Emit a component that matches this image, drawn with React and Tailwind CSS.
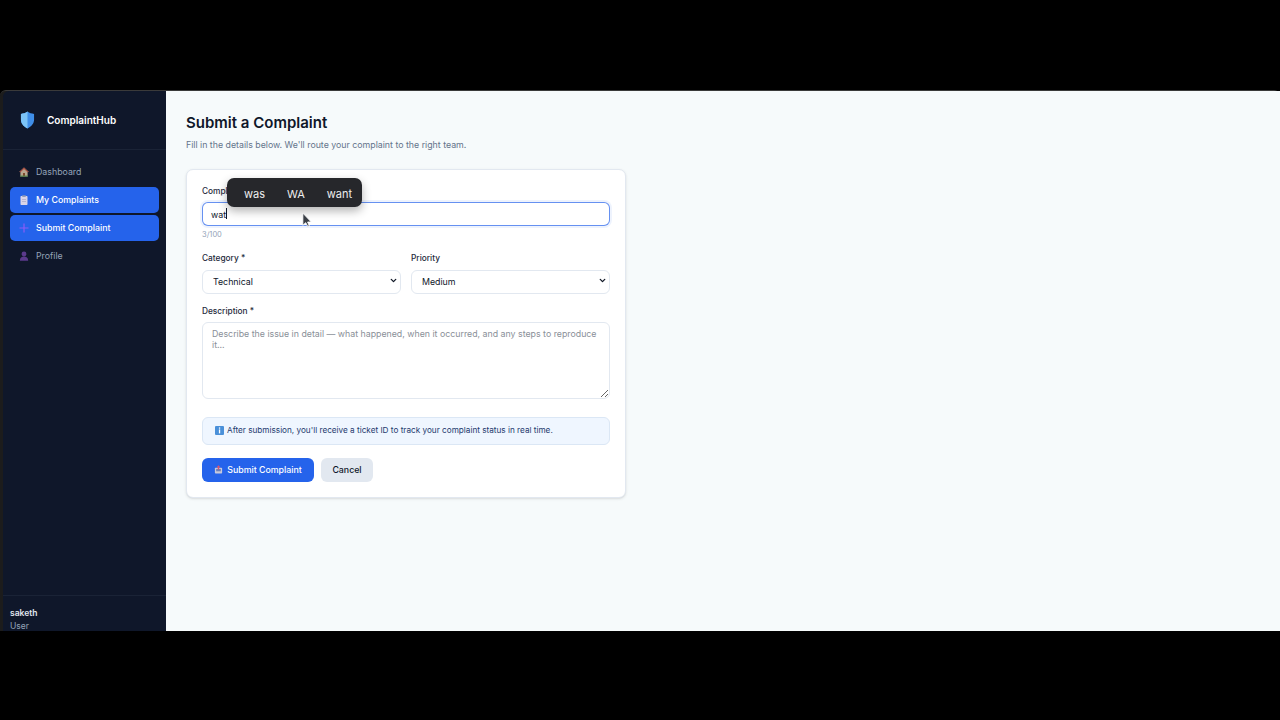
import { useState } from 'react'
import { ChevronDown } from 'lucide-react'

function ShieldLogo() {
  return (
    <svg width="15" height="18" viewBox="0 0 16 19">
      <path d="M8 0.5 C10 2 12.5 2.8 15 3 V9 C15 13.5 12 16.5 8 18.5 C4 16.5 1 13.5 1 9 V3 C3.5 2.8 6 2 8 0.5 Z" fill="#3f8ee8" />
      <path d="M8 0.5 C6 2 3.5 2.8 1 3 V9 C1 13.5 4 16.5 8 18.5 Z" fill="#7cc4f8" />
    </svg>
  )
}

function HouseIcon() {
  return (
    <svg width="10" height="10" viewBox="0 0 10 10">
      <path d="M5 0.5 L9.8 5 H8.6 V9.5 H1.4 V5 H0.2 Z" fill="#b9a68e" />
      <path d="M5 0.5 L9.8 5 L8.6 5.2 L5 2 L1.4 5.2 L0.2 5 Z" fill="#a8483c" />
      <rect x="4" y="6" width="2" height="3.5" fill="#7c4a2d" />
      <rect x="1" y="8.6" width="8" height="1" fill="#4f8a4c" />
    </svg>
  )
}

function ClipboardIcon() {
  return (
    <svg width="10" height="10" viewBox="0 0 10 10">
      <rect x="1.5" y="1" width="7" height="9" rx="0.8" fill="#d9d4e8" />
      <rect x="3.2" y="0.2" width="3.6" height="1.8" rx="0.4" fill="#8f9ab8" />
      <rect x="3" y="4" width="4" height="0.7" fill="#a9a6c4" />
      <rect x="3" y="6" width="4" height="0.7" fill="#a9a6c4" />
    </svg>
  )
}

function PlusIcon() {
  return (
    <svg width="10" height="10" viewBox="0 0 10 10">
      <path d="M5 0.5 V9.5 M0.5 5 H9.5" stroke="#8b5cf6" strokeWidth="1.2" />
    </svg>
  )
}

function BustIcon() {
  return (
    <svg width="10" height="10" viewBox="0 0 10 10">
      <circle cx="5" cy="3" r="2.4" fill="#5b3a8c" />
      <path d="M0.8 9.8 C0.8 6.8 2.8 5.6 5 5.6 C7.2 5.6 9.2 6.8 9.2 9.8 Z" fill="#5b3a8c" />
    </svg>
  )
}

function TrayIcon() {
  return (
    <svg width="9" height="9" viewBox="0 0 10 10">
      <rect x="1" y="3" width="8" height="6.5" rx="0.8" fill="#c7c9dc" />
      <rect x="2.4" y="4.4" width="5.2" height="2.6" fill="#6d7fb8" />
      <path d="M5 0.2 L7 2.4 H5.8 V5 H4.2 V2.4 H3 Z" fill="#e0526b" />
    </svg>
  )
}

function InfoIcon() {
  return (
    <svg width="9" height="9" viewBox="0 0 9 9">
      <rect width="9" height="9" rx="1" fill="#4a90d9" />
      <rect x="3.9" y="1.4" width="1.3" height="1.3" fill="#fff" />
      <rect x="3.9" y="3.4" width="1.3" height="4" fill="#fff" />
    </svg>
  )
}

const navItems = [
  { label: 'Dashboard', icon: <HouseIcon /> },
  { label: 'My Complaints', icon: <ClipboardIcon />, active: true },
  { label: 'Submit Complaint', icon: <PlusIcon />, active: true },
  { label: 'Profile', icon: <BustIcon /> },
]

function Sidebar() {
  return (
    <aside className="w-[163px] shrink-0 bg-[#0f172a] rounded-tl-[6px] flex flex-col overflow-hidden">
      <div className="h-[59px] flex items-center gap-[12px] pl-[17px] border-b border-[#1a2336]">
        <ShieldLogo />
        <span className="text-[10px] font-semibold text-white">ComplaintHub</span>
      </div>
      <nav className="flex flex-col gap-[2px] px-[7px] pt-[9px] flex-1">
        {navItems.map((item) => (
          <div
            key={item.label}
            className={`h-[26px] flex items-center gap-[7px] pl-[9px] rounded-[5px] text-[8.8px] ${
              item.active ? 'bg-[#2563eb] text-white font-medium' : 'text-[#94a3b8]'
            }`}
          >
            <span className="w-[10px] flex justify-center">{item.icon}</span>
            {item.label}
          </div>
        ))}
      </nav>
      <div className="h-[36px] shrink-0 border-t border-[#1a2336] pl-[7px] pt-[11px]">
        <div className="text-[8.5px] leading-[12px] font-semibold text-[#e2e8f0]">saketh</div>
        <div className="text-[8.5px] leading-[14px] text-[#94a3b8]">User</div>
      </div>
    </aside>
  )
}

function Label({ children }) {
  return <label className="block text-[8.3px] leading-[12px] font-medium text-[#1e293b]">{children}</label>
}

function SelectField({ label, options, value }) {
  return (
    <div>
      <Label>{label}</Label>
      <div className="relative mt-[3px]">
        <select
          defaultValue={value}
          className="w-full h-[24px] pl-[10px] bg-white border border-[#e2e8f0] rounded-[6px] text-[8.8px] text-[#0f172a] outline-none appearance-none"
        >
          {options.map((o) => (
            <option key={o}>{o}</option>
          ))}
        </select>
        <ChevronDown size={9} strokeWidth={3.5} className="absolute right-[3px] top-[9px] text-[#111827] pointer-events-none" />
      </div>
    </div>
  )
}

function ComplaintForm() {
  const [title, setTitle] = useState('wat')

  return (
    <div className="relative w-[440px] h-[329px] mt-[18px] bg-white border border-[#e2e8f0] rounded-[7px] px-[15px] pt-[15px] shadow-sm">
      <Label>Complaint Title *</Label>
      <input
        value={title}
        onChange={(e) => setTitle(e.target.value)}
        className="w-full h-[24px] mt-[5px] pl-[8px] pr-[9px] bg-white border-[1.5px] border-[#2563eb]/70 rounded-[6px] text-[8.8px] text-[#0f172a] outline-none shadow-[0_0_0_2px_rgba(37,99,235,0.08)]"
      />
      <div className="mt-[4px] text-[7.5px] leading-[10px] text-[#94a3b8]">3/100</div>

      <div className="grid grid-cols-2 gap-[10px] mt-[12px]">
        <SelectField label="Category *" options={['Technical', 'Billing', 'Service']} value="Technical" />
        <SelectField label="Priority" options={['Low', 'Medium', 'High']} value="Medium" />
      </div>

      <div className="mt-[11px]">
        <Label>Description *</Label>
        <textarea
          placeholder="Describe the issue in detail — what happened, when it occurred, and any steps to reproduce it..."
          className="block w-full h-[77px] mt-[5px] px-[9px] py-[5px] bg-white border border-[#e2e8f0] rounded-[6px] text-[8.8px] leading-[11px] text-[#0f172a] placeholder:text-[#8a8f98] outline-none"
        />
      </div>

      <div className="h-[28px] mt-[18px] flex items-center gap-[3px] pl-[12px] bg-[#eff6ff] border border-[#dbe7f5] rounded-[6px] text-[8.2px] text-[#1e3a6e]">
        <InfoIcon />
        <span>After submission, you'll receive a ticket ID to track your complaint status in real time.</span>
      </div>

      <div className="flex gap-[7px] mt-[13px]">
        <button className="w-[112px] h-[24px] flex items-center justify-center gap-[4px] bg-[#2563eb] rounded-[6px] text-[8.8px] font-medium text-white">
          <TrayIcon />
          Submit Complaint
        </button>
        <button className="w-[52px] h-[24px] bg-[#e2e8f0] rounded-[6px] text-[8.8px] font-medium text-[#0f172a]">
          Cancel
        </button>
      </div>

      {/* keyboard suggestion popup */}
      <div className="absolute left-[40px] top-[8px] w-[135px] h-[29px] flex items-center justify-between pt-[4px] pl-[17px] pr-[10px] bg-[#26272b] rounded-[7px] text-[11px] text-[#ededee] shadow-[0_4px_10px_rgba(0,0,0,0.3)]">
        <span>was</span>
        <span>WA</span>
        <span>want</span>
      </div>
      {/* text caret */}
      <div className="absolute left-[39px] top-[38px] w-px h-[11px] bg-[#0f172a]" />
      {/* mouse pointer */}
      <svg className="absolute left-[114px] top-[42px]" width="12" height="15" viewBox="0 0 9.5 13.5">
        <path d="M1 1 V12 L3.6 9.6 L5.4 13 L6.8 12.3 L5.3 9 H8.6 Z" fill="#3a3f46" stroke="#fff" strokeWidth="0.8" />
      </svg>
    </div>
  )
}

export default function App() {
  return (
    <div className="h-screen bg-black pt-[90px] pb-[89px] overflow-hidden" style={{ fontFamily: 'Inter, "Noto Sans", sans-serif' }}>
      <div className="h-full flex pl-[3px] bg-[#1c1c1c] border-t border-[#3a3a3a] rounded-t-[6px]">
        <Sidebar />
        <main className="flex-1 bg-[#f6fafb] pl-[20px] pt-[22px]">
          <h1 className="text-[15px] leading-[20px] font-semibold text-[#0f172a]">Submit a Complaint</h1>
          <p className="mt-[6px] text-[8.8px] leading-[12px] text-[#64748b]">
            Fill in the details below. We'll route your complaint to the right team.
          </p>
          <ComplaintForm />
        </main>
      </div>
    </div>
  )
}
